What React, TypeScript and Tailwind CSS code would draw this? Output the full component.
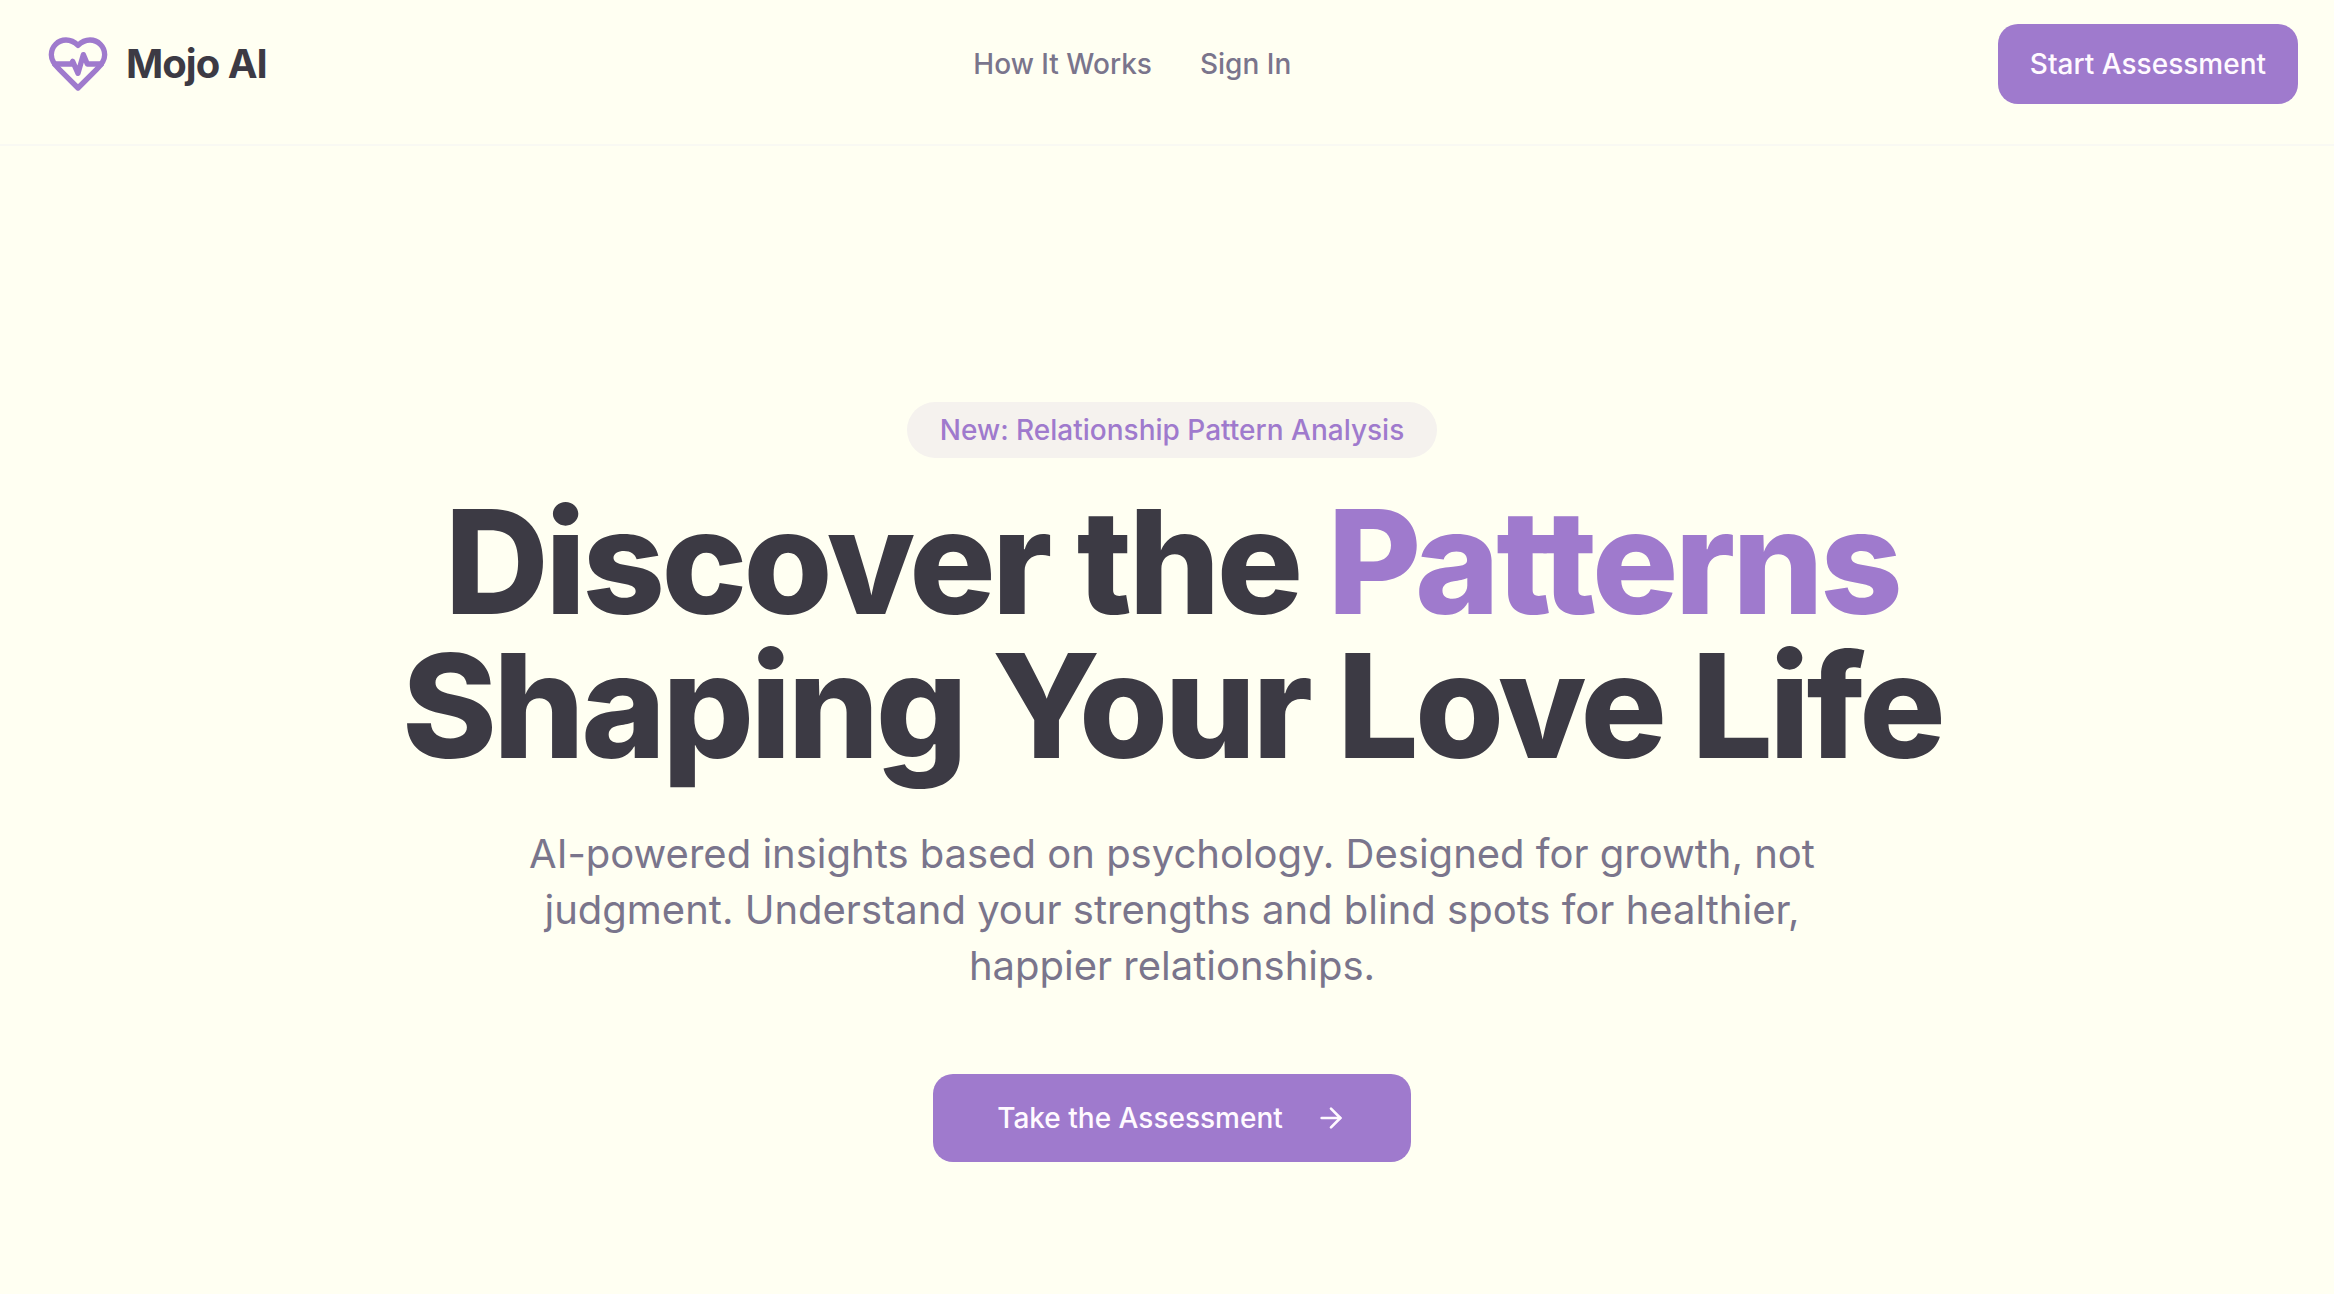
import { ArrowRight } from "lucide-react";

function HeartPulseLogo() {
  return (
    <svg
      viewBox="0 0 24 24"
      className="size-16 text-[#9f7acd]"
      fill="none"
      stroke="currentColor"
      strokeWidth={2}
      strokeLinecap="round"
      strokeLinejoin="round"
      aria-hidden="true"
    >
      <path d="M19 14c1.49-1.46 3-3.21 3-5.5A5.5 5.5 0 0 0 16.5 3c-1.76 0-3 .5-4.5 2-1.5-1.5-2.74-2-4.5-2A5.5 5.5 0 0 0 2 8.5c0 2.3 1.5 4.05 3 5.5l7 7Z" />
      <path d="M3.22 12H9.5l.5-1 2 4.5 2-7 1.5 3.5h5.27" />
    </svg>
  );
}

export default function App() {
  return (
    <div className="min-h-screen bg-[#fffff2] font-['Inter',sans-serif] text-[#3c3a44]">
      <header className="border-b-2 border-[#f9f9f3]">
        <nav className="flex items-start justify-between px-9 pt-6 pb-10">
          <a href="#" className="flex h-20 items-center gap-4 pl-2.5">
            <HeartPulseLogo />
            <span className="text-[40px] font-bold tracking-tight">Mojo AI</span>
          </a>
          <div className="flex h-20 items-center gap-12 text-[28px] font-medium text-[#7a758c]">
            <a href="#how">How It Works</a>
            <a href="#signin">Sign In</a>
          </div>
          <button className="h-20 rounded-[20px] bg-[#9f7acd] px-8 text-[28px] font-medium text-[#fffaff]">
            Start Assessment
          </button>
        </nav>
      </header>
      <main className="flex flex-col items-center pt-64 pr-9 pl-[46px] text-center">
        <p className="rounded-full bg-[#f5f2ee] px-[33px] py-2 text-[28px] leading-10 font-medium text-[#9f7acd]">
          New: Relationship Pattern Analysis
        </p>
        <h1 className="mt-8 text-[144px] leading-[144px] font-extrabold tracking-tight">
          Discover the <span className="text-[#9f7acd]">Patterns</span>
          <br />
          Shaping Your Love Life
        </h1>
        <p className="mt-12 max-w-[1344px] text-[40px] leading-14 text-[#7a758c]">
          AI-powered insights based on psychology. Designed for growth, not judgment. Understand your strengths and blind spots for healthier, happier relationships.
        </p>
        <button className="mt-20 flex h-[88px] items-center gap-8 rounded-[20px] bg-[#9f7acd] px-16 text-[28px] font-medium text-[#fffaff]">
          Take the Assessment
          <ArrowRight className="size-8" strokeWidth={2} />
        </button>
      </main>
    </div>
  );
}
